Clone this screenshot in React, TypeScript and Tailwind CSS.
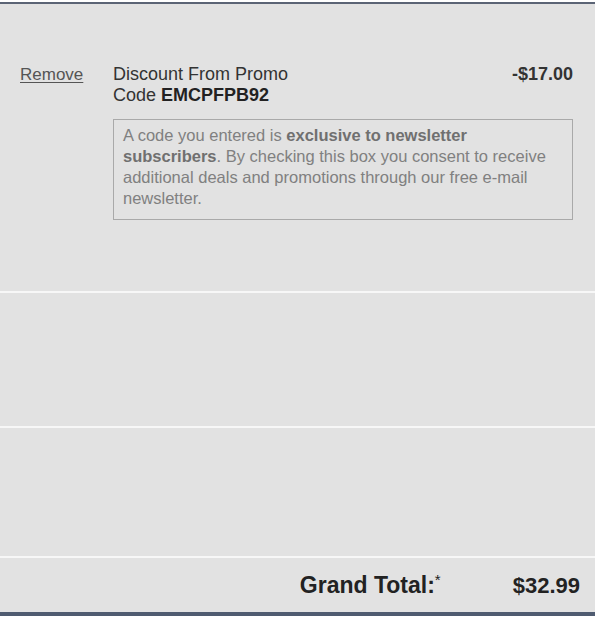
import React from 'react';

export default function App() {
  return (
    <div className="w-[600px] h-[620px] bg-white pt-[2px] font-['Liberation_Sans',Arial,sans-serif]">
      <div className="w-[595px] bg-[#e2e2e2] border-t-2 border-[#5b6475] border-b-4 border-b-[#4f5b70]">
        <section className="h-[287px] pt-[60px] flex">
          <a className="w-[113px] pl-[20px] text-[17px] leading-[21px] text-[#555] underline underline-offset-2">Remove</a>
          <div className="w-[460px]">
            <div className="flex justify-between">
              <p className="text-[18px] leading-[21px] text-[#333]">
                Discount From Promo
                <br />
                Code <span className="font-bold text-[#222]">EMCPFPB92</span>
              </p>
              <span className="text-[18px] leading-[21px] font-bold text-[#333]">-$17.00</span>
            </div>
            <div className="mt-[13px] border border-[#a9a9a9] px-[9px] pt-[5px] pb-[10px] text-[16.5px] leading-[21px] text-[#808080]">
              A code you entered is <b className="text-[#707070]">exclusive to newsletter subscribers</b>. By checking this box you consent to receive additional deals and promotions through our free e-mail newsletter.
            </div>
          </div>
        </section>
        <div className="h-[2px] bg-[#f7f7f7]" />
        <section className="h-[133px]" />
        <div className="h-[2px] bg-[#f7f7f7]" />
        <section className="h-[128px]" />
        <div className="h-[2px] bg-[#f7f7f7]" />
        <section className="h-[54px] flex items-center justify-end pr-[15px] font-bold text-[#222]">
          <span className="text-[23px]">Grand Total:<sup className="text-[15px] font-normal">*</sup></span>
          <span className="ml-[72px] text-[22px]">$32.99</span>
        </section>
      </div>
    </div>
  );
}
